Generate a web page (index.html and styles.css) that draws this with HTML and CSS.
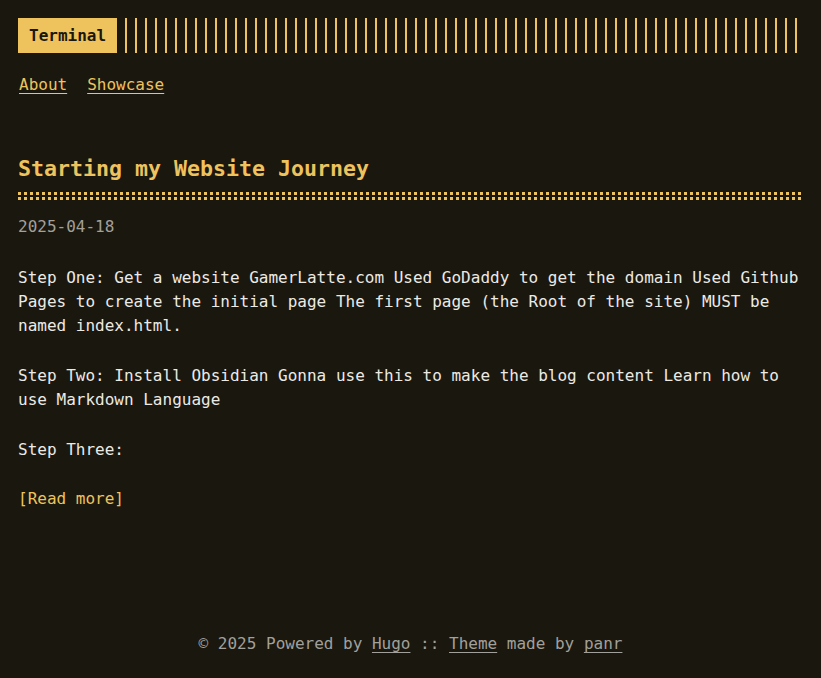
FILE: index.html
```html
<!DOCTYPE html>
<html lang="en">
<head>
<meta charset="utf-8">
<title>Terminal</title>
<link rel="stylesheet" href="styles.css">
</head>
<body>
<div class="container">
  <header class="header">
    <div class="header-logo">
      <a class="logo" href="#">Terminal</a>
      <span class="logo-bars"></span>
    </div>
    <nav class="menu">
      <a href="#">About</a>
      <a href="#">Showcase</a>
    </nav>
  </header>

  <main class="content">
    <article class="post">
      <h1 class="post-title">Starting my Website Journey</h1>
      <div class="post-rule"></div>
      <div class="post-date">2025-04-18</div>
      <div class="post-content">
        <p>Step One: Get a website GamerLatte.com Used GoDaddy to get the domain Used Github Pages to create the initial page The first page (the Root of the site) MUST be named index.html.</p>
        <p>Step Two: Install Obsidian Gonna use this to make the blog content Learn how to use Markdown Language</p>
        <p>Step Three:</p>
      </div>
      <a class="read-more" href="#">[Read more]</a>
    </article>
  </main>

  <footer class="footer">
    <span>© 2025 Powered by <a href="#">Hugo</a> :: <a href="#">Theme</a> made by <a href="#">panr</a></span>
  </footer>
</div>
</body>
</html>
```

FILE: styles.css
```css
html, body {
  margin: 0;
  padding: 0;
  background: #1a170f;
}

body {
  color: #eceae5;
  font-family: "DejaVu Sans Mono", "Liberation Mono", monospace;
  font-size: 16px;
  line-height: 24px;
}

.container {
  box-sizing: border-box;
  min-height: 100vh;
  padding: 18px 18px 0;
  display: flex;
  flex-direction: column;
}

.header-logo {
  display: flex;
  height: 35px;
}

.logo {
  display: flex;
  align-items: center;
  padding: 1px 11px 0;
  background: #eec35e;
  color: #1a170f;
  font-weight: bold;
  text-decoration: none;
}

.logo-bars {
  flex: 1;
  margin-left: 8px;
  background: repeating-linear-gradient(90deg, #eec35e 0, #eec35e 2px, transparent 2px, transparent 10px);
}

.menu {
  display: flex;
  gap: 20px;
  margin-top: 20px;
  padding-left: 1px;
}

.menu a {
  color: #eec35e;
  text-decoration: underline;
  text-underline-offset: 3px;
}

.content {
  margin-top: 58px;
}

.post-title {
  margin: 0;
  color: #eec35e;
  font-size: 21.6px;
  line-height: 28px;
  font-weight: bold;
  padding-bottom: 9px;
}

.post-rule {
  height: 8px;
  background-image:
    repeating-linear-gradient(90deg, #eec35e 0, #eec35e 3px, transparent 3px, transparent 6px),
    repeating-linear-gradient(90deg, #eec35e 0, #eec35e 3px, transparent 3px, transparent 6px);
  background-size: 100% 3px, 100% 3px;
  background-position: 0 0, 0 5px;
  background-repeat: no-repeat;
}

.post-date {
  margin-top: 15px;
  color: #a2a09a;
}

.post-content {
  margin-top: 27px;
}

.post-content p {
  margin: 0 0 26px;
}

.post-content p:last-child {
  margin-bottom: 0;
}

.read-more {
  display: inline-block;
  margin-top: 25px;
  color: #eec35e;
  text-decoration: none;
}

.footer {
  margin-top: auto;
  padding-bottom: 22px;
  text-align: center;
  color: #a2a09a;
}

.footer a {
  color: #a2a09a;
  text-decoration: underline;
  text-underline-offset: 3px;
}
```
